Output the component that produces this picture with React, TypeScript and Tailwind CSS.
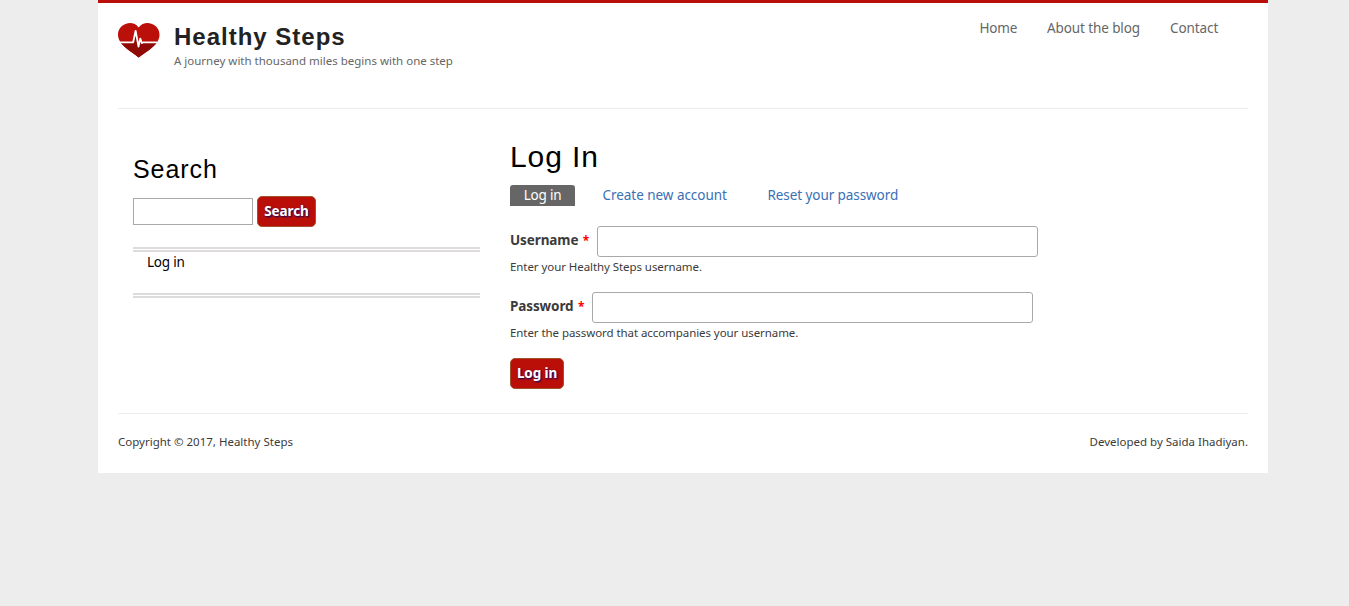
import React from "react";

const menu = [
  { label: "Home", cls: "w-[37.5px] tracking-[-0.2px]" },
  { label: "About the blog", cls: "w-[93px] tracking-[-0.1px]" },
  { label: "Contact", cls: "w-[49px] tracking-[-0.08px]" },
];

function Logo() {
  return (
    <svg className="block h-[35px] w-[42px]" viewBox="0 0 42 36" preserveAspectRatio="none" role="img" aria-label="Healthy Steps">
      <path d="M20.7 4.6C17.800.400 12.600-.7 8.200.700 3 2.400 0 6.800 0 12c0 10.500 14 17.500 20.700 23.500C28 29.500 41.500 22.500 41.500 12c0-5.200-3-9.600-8.200-11.300C28.900-.7 23.700.400 20.700 4.600Z" fill="#bb1009" />
      <path d="M1.900 19.200H15L17.500 8l3.300 15.500 1.200-8 1.500 3.700H39.500C34.500 26.500 25.500 31 20.700 35.500 16 31 7 26.500 1.900 19.200Z" fill="#8f0a05" />
      <path d="M2 19.800H15.200L17.600 8l2.900 16.300L22.300 16l1.600 4.800 1-1H39" fill="none" stroke="#fff" strokeWidth="1.800" strokeLinejoin="round" />
    </svg>
  );
}

function RedButton({ children, className }: { children: React.ReactNode; className: string }) {
  return (
    <button
      type="button"
      className={`h-[31px] shrink-0 rounded-[5px] border border-[#a0522d] bg-[#ba0f08] pb-px text-center text-[13.5px] leading-[20px] font-bold whitespace-nowrap text-white [text-shadow:1px_1px_2px_#000066] ${className}`}
    >
      {children}
    </button>
  );
}

function Field({ label, labelClass, type, help }: { label: string; labelClass: string; type: string; help: string }) {
  return (
    <div className="h-[66px]">
      <label className="flex h-[31px]">
        <span className={`shrink-0 pt-[4px] text-[13.5px] leading-[20px] font-bold tracking-[-0.1px] whitespace-nowrap ${labelClass}`}>
          {label} <span className="ml-px text-[12px] text-[#ff0000]">*</span>
        </span>
        <input type={type} className="h-[31px] w-[441px] rounded-[3px] border border-[#a9a9a9] bg-white px-2 outline-none" />
      </label>
      <p className="mt-px text-[11.5px] leading-[18px] tracking-[-0.07px] whitespace-nowrap">{help}</p>
    </div>
  );
}

export default function App() {
  return (
    <div className="min-h-screen bg-[#ededed] pl-[98px] font-['Noto_Sans',sans-serif] text-[#3b3b3b]">
      <div className="h-[473px] w-[1170px] border-t-[3px] border-[#ba0f08] bg-white px-[20px]">
        <header className="flex h-[106px] justify-between border-b border-[#ededed]">
          <div className="flex pt-[19px]">
            <div className="pt-[1px]">
              <Logo />
            </div>
            <div className="ml-[14px]">
              <h1 className="font-['Liberation_Sans',Arial,sans-serif] text-[24px] leading-[30px] font-bold tracking-[1px] text-[#222]">Healthy Steps</h1>
              <p className="text-[11.5px] leading-[18px] text-[#666]">A journey with thousand miles begins with one step</p>
            </div>
          </div>
          <nav className="flex gap-[30px] pt-[15px] pr-[29px] text-[13.5px] leading-[20px] whitespace-nowrap text-[#666]">
            {menu.map((m) => (
              <a key={m.label} className={m.cls}>{m.label}</a>
            ))}
          </nav>
        </header>

        <div className="flex h-[304px]">
          <aside className="ml-[15px] w-[347px] pt-[43px]">
            <h2 className="font-['Liberation_Sans',Arial,sans-serif] text-[25px] leading-[34px] tracking-[0.95px] text-black">Search</h2>
            <form className="mt-[10px] flex items-center gap-[4px]">
              <input aria-label="Search" className="h-[27px] w-[120px] border border-[#a9a9a9] bg-white px-1 outline-none" />
              <RedButton className="w-[59px] tracking-[-0.1px]">Search</RedButton>
            </form>
            <div className="mt-[20px] h-[51px] border-y-[5px] border-double border-[#dddbdc] pl-[14px] text-[13.5px] leading-[20px] tracking-[-0.2px] text-black">
              Log in
            </div>
          </aside>

          <main className="ml-[30px] pt-[28px]">
            <h1 className="font-['Liberation_Sans',Arial,sans-serif] text-[30px] leading-[40px] tracking-[0.9px] text-black">Log In</h1>
            <div className="mt-[8px] flex h-[21px] text-[13.5px] leading-[20px] whitespace-nowrap text-[#3a70b5]">
              <a className="w-[65px] rounded-t-[3px] bg-[#666] text-center tracking-[-0.2px] text-white">Log in</a>
              <a className="ml-[27.5px] w-[124.5px] tracking-[-0.04px]">Create new account</a>
              <a className="ml-[40.5px] tracking-[-0.08px]">Reset your password</a>
            </div>
            <form className="mt-[20px]">
              <Field label="Username" labelClass="w-[87px]" type="text" help="Enter your Healthy Steps username." />
              <Field label="Password" labelClass="w-[82px]" type="password" help="Enter the password that accompanies your username." />
              <RedButton className="w-[54px] tracking-[-0.1px]">Log in</RedButton>
            </form>
          </main>
        </div>

        <footer className="flex justify-between border-t border-[#ededed] pt-[19px] text-[11.5px] leading-[18px]">
          <p>Copyright © 2017, Healthy Steps</p>
          <p>Developed by Saida Ihadiyan.</p>
        </footer>
      </div>
    </div>
  );
}
